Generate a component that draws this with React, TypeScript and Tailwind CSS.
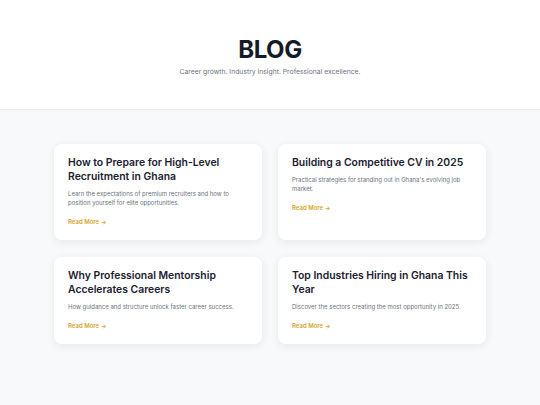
const POSTS = [
  {
    title: 'How to Prepare for High-Level Recruitment in Ghana',
    excerpt: 'Learn the expectations of premium recruiters and how to position yourself for elite opportunities.'
  },
  {
    title: 'Building a Competitive CV in 2025',
    excerpt: "Practical strategies for standing out in Ghana's evolving job market."
  },
  {
    title: 'Why Professional Mentorship Accelerates Careers',
    excerpt: 'How guidance and structure unlock faster career success.'
  },
  {
    title: 'Top Industries Hiring in Ghana This Year',
    excerpt: 'Discover the sectors creating the most opportunity in 2025.'
  }
];

export default function App() {
  return (
    <div className="min-h-screen bg-[#f8f9fb] font-['Inter',sans-serif] text-[#111827]">
      <header className="border-b border-[#e9eaee] bg-white pt-[35px] pb-[32px] text-center shadow-[0_1px_2px_rgba(0,0,0,0.03)]">
        <h1 className="text-[24px] font-bold leading-[30px] tracking-[-0.02em] text-[#141a2a]">BLOG</h1>
        <p className="mt-[2px] text-[6.8px] leading-[10px] text-[#6b7280]">
          Career growth. Industry insight. Professional excellence.
        </p>
      </header>

      <main className="mx-auto grid w-[432px] grid-cols-2 gap-x-4 gap-y-[17px] pt-[34px] pb-10">
        {POSTS.map((post) => (
          <article
            key={post.title}
            className="flex flex-col rounded-[8px] bg-white px-[14px] pt-[12px] pb-[14px] shadow-[0_2px_8px_rgba(17,24,39,0.08)]"
          >
            <h2 className="text-[10.4px] font-semibold leading-[14px] text-[#1b2130]">{post.title}</h2>
            <p className="mt-[5px] text-[6px] leading-[9px] text-[#6b7280]">{post.excerpt}</p>
            <a href="#" className="mt-[10px] text-[6px] font-semibold leading-[9px] text-[#d6a62c]">
              Read More →
            </a>
          </article>
        ))}
      </main>
    </div>
  );
}
